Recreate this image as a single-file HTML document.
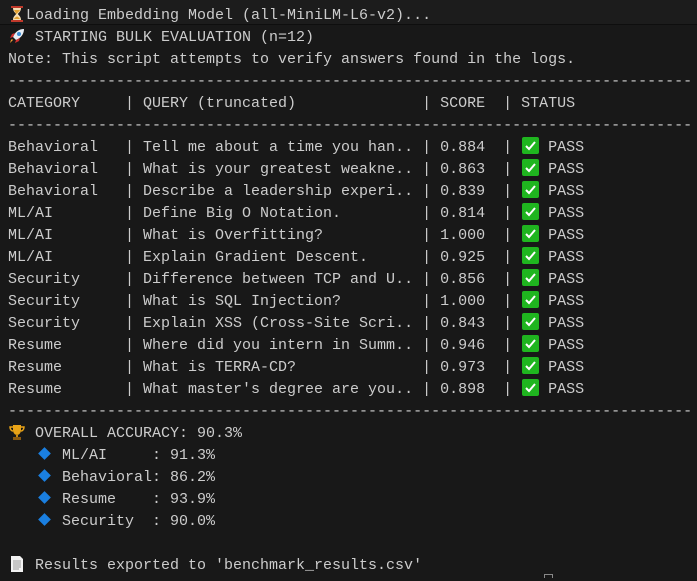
<!DOCTYPE html>
<html><head><meta charset="utf-8"><style>
html,body{margin:0;padding:0;background:#181818;width:697px;height:578px;overflow:hidden}
.t{position:absolute;left:8px;top:7px;font-family:"Liberation Mono",monospace;font-size:15px;line-height:22px;color:#cccccc}
.l{height:22px;position:relative;white-space:pre}
.f{margin-top:-2px}
.e{display:inline-block;width:18px;height:18px;vertical-align:-4px;position:relative}
.ck{display:inline-block;width:17px;height:17px;background:#1fb51f;border-radius:2px;vertical-align:-3px;margin-left:1px;position:relative}
.dm{display:inline-block;width:9px;height:9px;background:#1a7fe0;transform:rotate(45deg);margin:0 4px 0 5px;vertical-align:1px}
.top{position:absolute;left:0;top:0;width:697px;height:24px;background:#1c1c1c;border-bottom:1px solid #0e0e0e}
</style></head><body>
<div class="top"></div>
<div class="t"><div class="l f"><span class="e"><svg width="18" height="18" viewBox="0 0 18 18"><rect x="3" y="1" width="12" height="2" fill="#c0392b"/><rect x="3" y="15" width="12" height="2" fill="#c0392b"/><path d="M5 3h8c0 4-3 5-3 6s3 2 3 6H5c0-4 3-5 3-6S5 7 5 3z" fill="#f5deb3"/><path d="M6 5h6c-1 2-3 3-3 4s-2-2-3-4zM6 14c1-2 3-2 3-3 0 1 2 1 3 3z" fill="#e0a030"/></svg></span>Loading Embedding Model (all-MiniLM-L6-v2)...</div><div class="l"><span class="e"><svg width="18" height="18" viewBox="0 0 18 18"><path d="M16 2c-5 0-9 3-11 8l3 3c5-2 8-6 8-11z" fill="#e8eef5"/><circle cx="11" cy="7" r="2" fill="#3a8fd8"/><path d="M5 10l-3 1 2-4 3-1zM8 13l-1 3 4-2 1-3z" fill="#d03030"/><path d="M5 13l-3 3 1-3 1-1z" fill="#f5a030"/></svg></span> STARTING BULK EVALUATION (n=12)</div><div class="l">Note: This script attempts to verify answers found in the logs.</div><div class="l">----------------------------------------------------------------------------</div><div class="l">CATEGORY     | QUERY (truncated)              | SCORE  | STATUS</div><div class="l">----------------------------------------------------------------------------</div><div class="l">Behavioral   | Tell me about a time you han.. | 0.884  | <span class="ck"><svg width="17" height="17" viewBox="0 0 17 17"><path d="M4 9l3 3 6-7" stroke="#fff" stroke-width="2" fill="none"/></svg></span> PASS</div><div class="l">Behavioral   | What is your greatest weakne.. | 0.863  | <span class="ck"><svg width="17" height="17" viewBox="0 0 17 17"><path d="M4 9l3 3 6-7" stroke="#fff" stroke-width="2" fill="none"/></svg></span> PASS</div><div class="l">Behavioral   | Describe a leadership experi.. | 0.839  | <span class="ck"><svg width="17" height="17" viewBox="0 0 17 17"><path d="M4 9l3 3 6-7" stroke="#fff" stroke-width="2" fill="none"/></svg></span> PASS</div><div class="l">ML/AI        | Define Big O Notation.         | 0.814  | <span class="ck"><svg width="17" height="17" viewBox="0 0 17 17"><path d="M4 9l3 3 6-7" stroke="#fff" stroke-width="2" fill="none"/></svg></span> PASS</div><div class="l">ML/AI        | What is Overfitting?           | 1.000  | <span class="ck"><svg width="17" height="17" viewBox="0 0 17 17"><path d="M4 9l3 3 6-7" stroke="#fff" stroke-width="2" fill="none"/></svg></span> PASS</div><div class="l">ML/AI        | Explain Gradient Descent.      | 0.925  | <span class="ck"><svg width="17" height="17" viewBox="0 0 17 17"><path d="M4 9l3 3 6-7" stroke="#fff" stroke-width="2" fill="none"/></svg></span> PASS</div><div class="l">Security     | Difference between TCP and U.. | 0.856  | <span class="ck"><svg width="17" height="17" viewBox="0 0 17 17"><path d="M4 9l3 3 6-7" stroke="#fff" stroke-width="2" fill="none"/></svg></span> PASS</div><div class="l">Security     | What is SQL Injection?         | 1.000  | <span class="ck"><svg width="17" height="17" viewBox="0 0 17 17"><path d="M4 9l3 3 6-7" stroke="#fff" stroke-width="2" fill="none"/></svg></span> PASS</div><div class="l">Security     | Explain XSS (Cross-Site Scri.. | 0.843  | <span class="ck"><svg width="17" height="17" viewBox="0 0 17 17"><path d="M4 9l3 3 6-7" stroke="#fff" stroke-width="2" fill="none"/></svg></span> PASS</div><div class="l">Resume       | Where did you intern in Summ.. | 0.946  | <span class="ck"><svg width="17" height="17" viewBox="0 0 17 17"><path d="M4 9l3 3 6-7" stroke="#fff" stroke-width="2" fill="none"/></svg></span> PASS</div><div class="l">Resume       | What is TERRA-CD?              | 0.973  | <span class="ck"><svg width="17" height="17" viewBox="0 0 17 17"><path d="M4 9l3 3 6-7" stroke="#fff" stroke-width="2" fill="none"/></svg></span> PASS</div><div class="l">Resume       | What master's degree are you.. | 0.898  | <span class="ck"><svg width="17" height="17" viewBox="0 0 17 17"><path d="M4 9l3 3 6-7" stroke="#fff" stroke-width="2" fill="none"/></svg></span> PASS</div><div class="l">----------------------------------------------------------------------------</div><div class="l"><span class="e"><svg width="18" height="18" viewBox="0 0 18 18"><path d="M5 2h8v5c0 3-2 5-4 5s-4-2-4-5z" fill="#e8a317"/><path d="M5 4H2c0 3 2 4 3 4M13 4h3c0 3-2 4-3 4" stroke="#e8a317" stroke-width="1.5" fill="none"/><rect x="8" y="11" width="2" height="3" fill="#c88a10"/><rect x="5" y="14" width="8" height="3" fill="#8a5a10"/></svg></span> OVERALL ACCURACY: 90.3%</div><div class="l">   <span class="dm"></span> ML/AI     : 91.3%</div><div class="l">   <span class="dm"></span> Behavioral: 86.2%</div><div class="l">   <span class="dm"></span> Resume    : 93.9%</div><div class="l">   <span class="dm"></span> Security  : 90.0%</div><div class="l"> </div><div class="l"><span class="e"><svg width="18" height="18" viewBox="0 0 18 18"><path d="M3 1h9l3 3v13H3z" fill="#f2f2f2"/><path d="M5 6h8M5 8h8M5 10h8M5 12h8M5 14h6" stroke="#999" stroke-width="1"/></svg></span> Results exported to 'benchmark_results.csv'</div></div>
<div style="position:absolute;left:544px;top:574px;width:9px;height:4px;border:1px solid #888;border-bottom:none;box-sizing:border-box"></div>
</body></html>
